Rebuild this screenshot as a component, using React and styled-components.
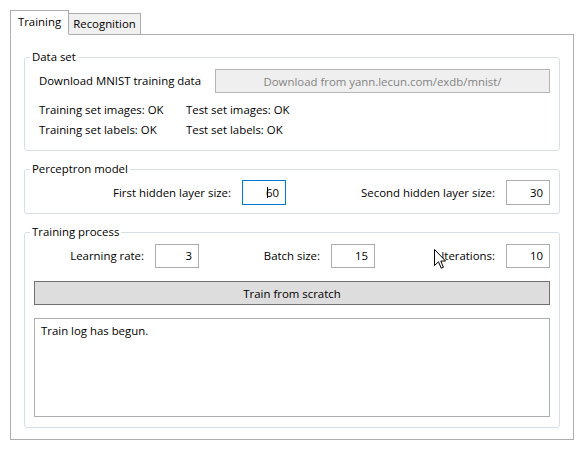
import React from 'react';
import styled, { createGlobalStyle } from 'styled-components';

const GlobalStyle = createGlobalStyle`
    html, body {
        margin: 0;
        padding: 0;
        background: #ffffff;
    }
    body {
        font-family: "Open Sans", "Noto Sans", sans-serif;
        font-size: 11.4px;
        color: #000000;
    }
`;

const Window = styled.div`
    width: 584px;
    height: 450px;
    box-sizing: border-box;
    padding: 10px 0 0 10px;
    position: relative;
`;

const TabBar = styled.div`
    display: flex;
    align-items: flex-end;
    height: 25px;
    position: relative;
    z-index: 1;
`;

const Tab = styled.div`
    box-sizing: border-box;
    width: ${p => p.width}px;
    height: ${p => (p.active ? 25 : 22)}px;
    border: 1px solid #acacac;
    border-bottom: ${p => (p.active ? '1px solid #ffffff' : '1px solid #acacac')};
    border-left: ${p => (p.first ? '1px solid #acacac' : 'none')};
    background: ${p => (p.active ? '#ffffff' : '#f0f0f0')};
    display: flex;
    align-items: center;
    justify-content: center;
    padding-bottom: ${p => (p.active ? 2 : 0)}px;
    line-height: 16px;
`;

const Panel = styled.div`
    box-sizing: border-box;
    width: 564px;
    height: 406px;
    margin-top: -1px;
    border: 1px solid #adadad;
    background: #ffffff;
    padding: 14px 13px 0 13px;
    display: flex;
    flex-direction: column;
    gap: 10px;
`;

const Group = styled.fieldset`
    margin: 0;
    border: 1px solid #d5dfe5;
    border-radius: 3px;
    padding: ${p => p.pad || '4px 9px 10px 9px'};
    min-width: 0;
`;

const Legend = styled.legend`
    padding: 0 2px;
    margin-left: -4px;
    line-height: 16px;
`;

const Row = styled.div`
    display: flex;
    align-items: center;
    height: ${p => p.h || 24}px;
    padding-left: ${p => p.indent || 0}px;
`;

const Label = styled.span`
    white-space: nowrap;
    line-height: 20px;
`;

const StatusGrid = styled.div`
    display: grid;
    grid-template-columns: 147px 1fr;
    grid-auto-rows: 20px;
    padding: 7px 0 0 5px;
    line-height: 20px;
`;

const DisabledButton = styled.div`
    box-sizing: border-box;
    margin-left: auto;
    width: 335px;
    height: 24px;
    border: 1px solid #b5b5b5;
    background: #efefef;
    color: #838383;
    display: flex;
    align-items: center;
    justify-content: center;
`;

const FieldGrid = styled.div`
    display: grid;
    grid-template-columns: ${p => p.cols};
    padding-top: ${p => p.top || 0}px;
`;

const Cell = styled.div`
    display: flex;
    align-items: center;
    justify-content: flex-end;
    gap: 11px;
`;

const NumberField = styled.div`
    box-sizing: border-box;
    width: 44px;
    height: ${p => p.h || 24}px;
    border: 1px solid ${p => (p.focused ? '#0078d7' : '#abadb3')};
    background: #ffffff;
    display: flex;
    align-items: center;
    justify-content: flex-end;
    padding-right: 6px;
    line-height: 16px;
`;

const Caret = styled.span`
    display: inline-block;
    width: 1px;
    height: 11px;
    background: #000000;
    margin-right: -2px;
    position: relative;
    z-index: 1;
`;

const TrainButton = styled.div`
    box-sizing: border-box;
    height: 24px;
    margin-top: 13px;
    border: 1px solid #707070;
    background: #dddddd;
    display: flex;
    align-items: center;
    justify-content: center;
`;

const LogBox = styled.div`
    box-sizing: border-box;
    height: 99px;
    margin-top: 13px;
    border: 1px solid #abadb3;
    background: #ffffff;
    padding: 4px 6px;
    line-height: 16px;
`;

const Cursor = styled.svg`
    position: absolute;
    left: 434px;
    top: 249px;
    pointer-events: none;
`;

export default function App() {
    return (
        <>
            <GlobalStyle />
            <Window>
                <TabBar>
                    <Tab first active width={59}>Training</Tab>
                    <Tab width={72}>Recognition</Tab>
                </TabBar>
                <Panel>
                    <Group>
                        <Legend>Data set</Legend>
                        <Row indent={5}>
                            <Label>Download MNIST training data</Label>
                            <DisabledButton>Download from yann.lecun.com/exdb/mnist/</DisabledButton>
                        </Row>
                        <StatusGrid>
                            <span>Training set images: OK</span>
                            <span>Test set images: OK</span>
                            <span>Training set labels: OK</span>
                            <span>Test set labels: OK</span>
                        </StatusGrid>
                    </Group>

                    <Group pad="2px 9px 8px 9px">
                        <Legend>Perceptron model</Legend>
                        <FieldGrid cols="252px 1fr" top={1}>
                            <Cell>
                                <Label>First hidden layer size:</Label>
                                <NumberField focused h={25}><Caret />60</NumberField>
                            </Cell>
                            <Cell>
                                <Label>Second hidden layer size:</Label>
                                <NumberField h={25}>30</NumberField>
                            </Cell>
                        </FieldGrid>
                    </Group>

                    <Group pad="2px 9px 10px 9px">
                        <Legend>Training process</Legend>
                        <FieldGrid cols="165px 176px 1fr" top={2}>
                            <Cell>
                                <Label>Learning rate:</Label>
                                <NumberField>3</NumberField>
                            </Cell>
                            <Cell>
                                <Label>Batch size:</Label>
                                <NumberField>15</NumberField>
                            </Cell>
                            <Cell>
                                <Label>Iterations:</Label>
                                <NumberField>10</NumberField>
                            </Cell>
                        </FieldGrid>
                        <TrainButton>Train from scratch</TrainButton>
                        <LogBox>Train log has begun.</LogBox>
                    </Group>
                </Panel>
                <Cursor width="13" height="21" viewBox="0 0 13 21">
                    <path d="M0.5 0.5 L0.5 16.5 L4.5 12.8 L7.2 19.2 L9.4 18.3 L6.8 12 L11.6 12 Z"
                          fill="#ffffff" stroke="#000000" strokeWidth="1" strokeLinejoin="miter" />
                </Cursor>
            </Window>
        </>
    );
}
